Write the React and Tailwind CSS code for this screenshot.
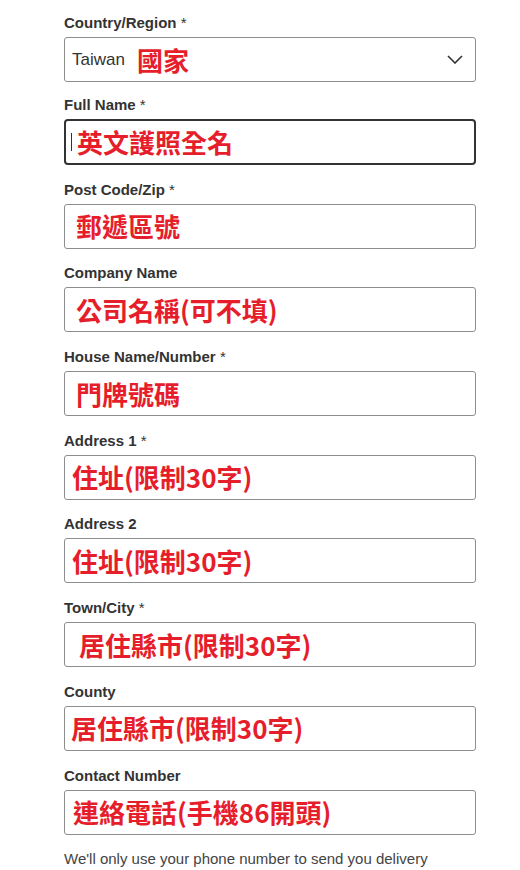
import React from 'react'

const fields = [
  { label: 'Full Name', required: true, text: '英文護照全名', pad: 'pl-[13px]', focus: true },
  { label: 'Post Code/Zip', required: true, text: '郵遞區號', pad: 'pl-[11px]' },
  { label: 'Company Name', required: false, text: '公司名稱(可不填)', pad: 'pl-[11px]' },
  { label: 'House Name/Number', required: true, text: '門牌號碼', pad: 'pl-[11px]' },
  { label: 'Address 1', required: true, text: '住址(限制30字)', pad: 'pl-[7px]' },
  { label: 'Address 2', required: false, text: '住址(限制30字)', pad: 'pl-[7px]' },
  { label: 'Town/City', required: true, text: '居住縣市(限制30字)', pad: 'pl-[14px]' },
  { label: 'County', required: false, text: '居住縣市(限制30字)', pad: 'pl-[6px]' },
  { label: 'Contact Number', required: false, text: '連絡電話(手機86開頭)', pad: 'pl-[8px]' },
]

const redText = "font-['Noto_Sans_CJK_TC','Noto_Sans_CJK_SC',sans-serif] text-[26px] font-bold text-[#e61e2b] leading-none"

const Label = ({ children, required }) => (
  <label className="block text-[15px] leading-[18px] font-bold text-[#333] mb-[5px]">
    {children}
    {required && <span className="font-normal"> *</span>}
  </label>
)

const App = () => {
  return (
    <div className="min-h-[870px] bg-white font-['Liberation_Sans',Arial,sans-serif] pt-[14px] pl-16">
      <div className="w-[412px]">
        <div className="mb-[14px]">
          <Label required>Country/Region</Label>
          <div className="h-[45px] border border-[#8d8d8d] rounded-[3px] flex items-center pl-[7px] pr-[12px]">
            <span className="text-[17px] text-[#333]">Taiwan</span>
            <span className={redText + ' ml-[12px]'}>國家</span>
            <svg className="ml-auto" width="16" height="9" viewBox="0 0 16 9" fill="none">
              <path d="M1 1l7 7 7-7" stroke="#333" strokeWidth="1.6" />
            </svg>
          </div>
        </div>

        {fields.map((f, idx) => (
          <div key={idx} className="mb-[15.7px]">
            <Label required={f.required}>{f.label}</Label>
            <div
              className={
                f.focus
                  ? 'h-[46px] border-2 border-[#333] rounded-[4px] flex items-center pl-[5px]'
                  : 'h-[45px] border border-[#8d8d8d] rounded-[3px] flex items-center ' + f.pad
              }
            >
              {f.focus && <span className="w-px h-[18px] bg-[#333] mr-[5px]" />}
              <span className={redText}>{f.text}</span>
            </div>
          </div>
        ))}

        <p className="text-[15px] leading-[18px] text-[#444]">
          We'll only use your phone number to send you delivery
        </p>
      </div>
    </div>
  )
}

export default App
